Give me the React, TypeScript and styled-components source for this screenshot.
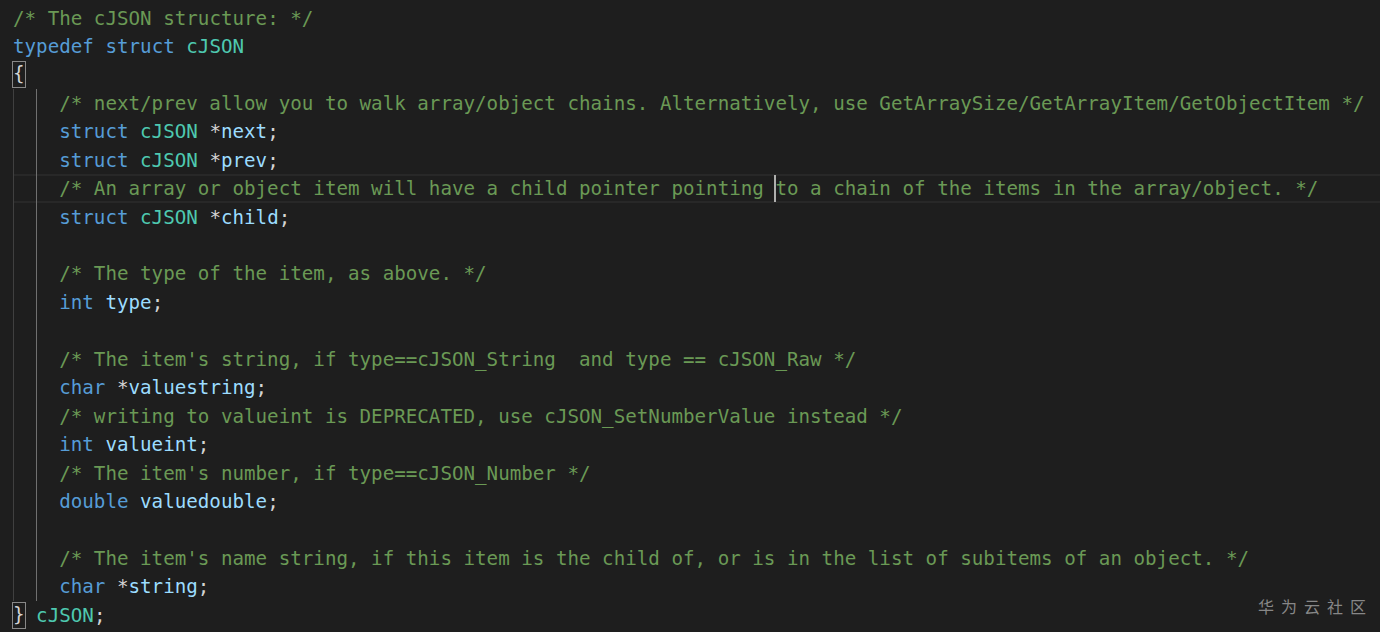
import React from "react";
import styled, { createGlobalStyle } from "styled-components";

const Global = createGlobalStyle`
  html, body { margin: 0; padding: 0; background: #1e1e1e; }
  #root { height: 632px; }
`;

const Editor = styled.div`
  position: relative;
  height: 632px;
  overflow: hidden;
  background: #1e1e1e;
  padding: 3.8px 0 0 13px;
  box-sizing: border-box;
  font-family: "DejaVu Sans Mono", "Liberation Mono", monospace;
  font-size: 19.2px;
  -webkit-font-smoothing: antialiased;
`;

const Line = styled.div<{ $current?: boolean }>`
  display: flex;
  align-items: center;
  height: 28.45px;
  box-sizing: border-box;
  white-space: pre;
  border-top: 2px solid ${(p) => (p.$current ? "#282828" : "transparent")};
  border-bottom: 2px solid ${(p) => (p.$current ? "#282828" : "transparent")};
  margin: 0;
`;

const Indent = styled.span`
  display: flex;
  align-self: stretch;
  width: 46.2px;
  flex: none;
  margin: -2px 0;
`;

const Guide = styled.span<{ $active?: boolean }>`
  display: block;
  width: 23.1px;
  border-left: 1px solid ${(p) => (p.$active ? "#707070" : "#404040")};
  box-sizing: border-box;
`;

const Tok = styled.span<{ $c: string }>`
  color: ${(p) => p.$c};
`;

const Bracket = styled.span`
  color: #d4d4d4;
  outline: 1px solid #888888;
  outline-offset: 0;
  display: inline-block;
  line-height: 24px;
  height: 25px;
  width: 11.55px;
  text-align: center;
  box-sizing: border-box;
`;

const Caret = styled.span`
  position: relative;
  display: inline-block;
  width: 0;
  height: 100%;
  &::before {
    content: "";
    position: absolute;
    left: -1px;
    top: -1px;
    bottom: -1px;
    width: 2px;
    background: #aeafad;
  }
`;

const Watermark = styled.div`
  position: absolute;
  right: 7px;
  bottom: 14px;
  font-family: "Noto Sans CJK SC", sans-serif;
  font-size: 16px;
  letter-spacing: 7px;
  color: #9a9a9a;
  opacity: 0.85;
`;

const C: Record<string, string> = {
  c: "#6a9955",
  k: "#569cd6",
  t: "#4ec9b0",
  v: "#9cdcfe",
  p: "#d4d4d4",
};

type T = [string, string];

const lines: { indent: boolean; toks: T[]; current?: boolean }[] = [
  { indent: false, toks: [["c", "/* The cJSON structure: */"]] },
  { indent: false, toks: [["k", "typedef"], ["p", " "], ["k", "struct"], ["p", " "], ["t", "cJSON"]] },
  { indent: false, toks: [["brace", "{"]] },
  { indent: true, toks: [["c", "/* next/prev allow you to walk array/object chains. Alternatively, use GetArraySize/GetArrayItem/GetObjectItem */"]] },
  { indent: true, toks: [["k", "struct"], ["p", " "], ["t", "cJSON"], ["p", " *"], ["v", "next"], ["p", ";"]] },
  { indent: true, toks: [["k", "struct"], ["p", " "], ["t", "cJSON"], ["p", " *"], ["v", "prev"], ["p", ";"]] },
  {
    indent: true,
    current: true,
    toks: [
      ["c", "/* An array or object item will have a child pointer pointing "],
      ["caret", ""],
      ["c", "to a chain of the items in the array/object. */"],
    ],
  },
  { indent: true, toks: [["k", "struct"], ["p", " "], ["t", "cJSON"], ["p", " *"], ["v", "child"], ["p", ";"]] },
  { indent: true, toks: [] },
  { indent: true, toks: [["c", "/* The type of the item, as above. */"]] },
  { indent: true, toks: [["k", "int"], ["p", " "], ["v", "type"], ["p", ";"]] },
  { indent: true, toks: [] },
  { indent: true, toks: [["c", "/* The item's string, if type==cJSON_String  and type == cJSON_Raw */"]] },
  { indent: true, toks: [["k", "char"], ["p", " *"], ["v", "valuestring"], ["p", ";"]] },
  { indent: true, toks: [["c", "/* writing to valueint is DEPRECATED, use cJSON_SetNumberValue instead */"]] },
  { indent: true, toks: [["k", "int"], ["p", " "], ["v", "valueint"], ["p", ";"]] },
  { indent: true, toks: [["c", "/* The item's number, if type==cJSON_Number */"]] },
  { indent: true, toks: [["k", "double"], ["p", " "], ["v", "valuedouble"], ["p", ";"]] },
  { indent: true, toks: [] },
  { indent: true, toks: [["c", "/* The item's name string, if this item is the child of, or is in the list of subitems of an object. */"]] },
  { indent: true, toks: [["k", "char"], ["p", " *"], ["v", "string"], ["p", ";"]] },
  { indent: false, toks: [["brace", "}"], ["p", " "], ["t", "cJSON"], ["p", ";"]] },
];

export default function App() {
  return (
    <>
      <Global />
      <Editor>
        {lines.map((l, i) => (
          <Line key={i} $current={l.current}>
            {l.indent && (
              <Indent>
                <Guide />
                <Guide $active />
              </Indent>
            )}
            {l.toks.map(([k, s], j) =>
              k === "brace" ? (
                <Bracket key={j}>{s}</Bracket>
              ) : k === "caret" ? (
                <Caret key={j} />
              ) : (
                <Tok key={j} $c={C[k]}>
                  {s}
                </Tok>
              )
            )}
          </Line>
        ))}
        <Watermark>华为云社区</Watermark>
      </Editor>
    </>
  );
}
